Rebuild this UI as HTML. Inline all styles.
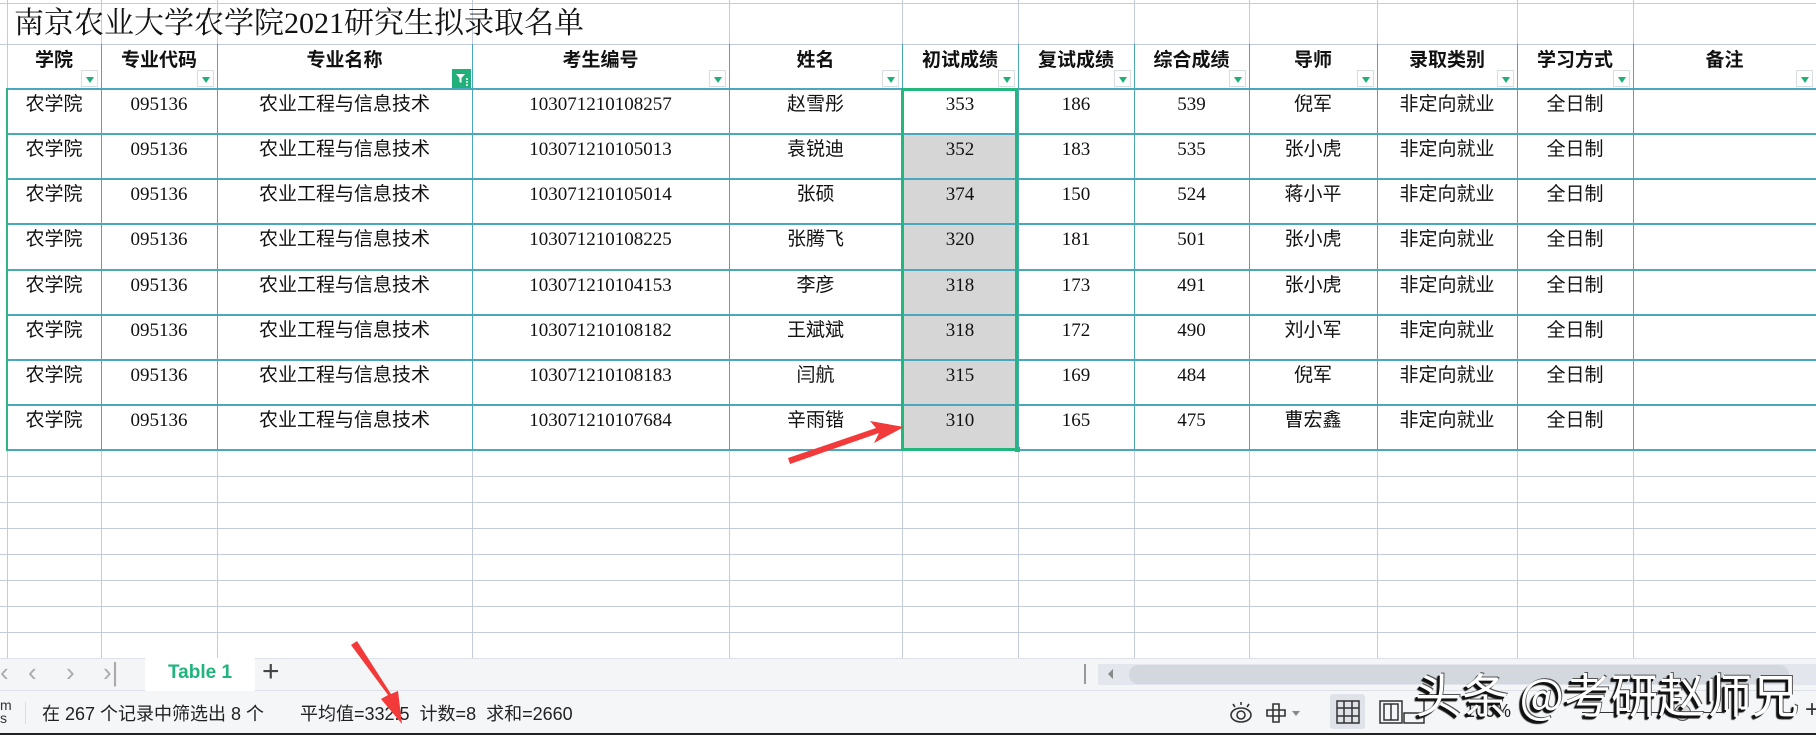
<!DOCTYPE html>
<html><head><meta charset="utf-8">
<style>
*{margin:0;padding:0;box-sizing:border-box}
body{width:1816px;height:735px;overflow:hidden;background:#fff;position:relative;font-family:"Liberation Serif","Noto Serif CJK SC",serif;}
.a{position:absolute}
.vl{position:absolute;width:1px;background:#c5cbdc}
.hl{position:absolute;height:1px;background:#c5cbdc}
.tl{position:absolute;height:2px;background:#4aa8bd}
.tv{position:absolute;width:1px;background:#4aa8bd}
.h{position:absolute;top:44px;height:45px;text-align:center;font-family:"Liberation Sans","Noto Sans CJK SC",sans-serif;font-weight:bold;font-size:19px;line-height:26px;color:#111}
.c{position:absolute;text-align:center;font-size:19px;line-height:26px;color:#111;font-family:"Liberation Serif","Noto Sans CJK SC",serif}
.dd{position:absolute;width:17px;height:17px;background:#fff;border:1px solid #d8dce3}
.dd:after{content:"";position:absolute;left:4px;top:6px;border-left:4px solid transparent;border-right:4px solid transparent;border-top:6px solid #1fb07a}
.sans{font-family:"Liberation Sans","Noto Sans CJK SC",sans-serif}
</style></head><body>
<!-- selected column -->
<div class="a" style="left:902px;top:134px;width:116px;height:316px;background:#d6d6d6"></div>
<div id="g"></div>
<!-- title -->
<div class="a" style="left:14px;top:4px;font-size:30px;line-height:40px;color:#111;font-family:'Liberation Serif','Noto Serif CJK SC',serif">南京农业大学农学院2021研究生拟录取名单</div>
<!-- tab bar -->
<div class="a" style="left:0;top:658px;width:1816px;height:33px;background:#f4f5f7;border-top:1px solid #dde0e6;border-bottom:1px solid #dde0e6"></div>
<div class="a" style="left:145px;top:658px;width:110px;height:33px;background:#fff"></div>
<div class="a sans" style="left:145px;top:662px;width:110px;text-align:center;font-size:19px;font-weight:bold;color:#1fb47c">Table 1</div>
<div class="a sans" style="left:0;top:657px;font-size:26px;color:#aaa">&#x2039;</div>
<div class="a sans" style="left:28px;top:657px;font-size:26px;color:#aaa">&#x2039;</div>
<div class="a sans" style="left:66px;top:657px;font-size:26px;color:#aaa">&#x203A;</div>
<div class="a sans" style="left:103px;top:657px;font-size:26px;color:#aaa">&#x203A;|</div>
<div class="a sans" style="left:262px;top:655px;font-size:30px;color:#444">+</div>
<div class="a" style="left:1084px;top:664px;width:2px;height:20px;border-left:1px solid #999;border-right:1px solid #999"></div>
<div class="a" style="left:1098px;top:664px;width:718px;height:21px;background:#e3e6ec"></div>
<div class="a" style="left:1108px;top:669px;border-top:5px solid transparent;border-bottom:5px solid transparent;border-right:5px solid #888"></div>
<div class="a" style="left:1129px;top:665px;width:660px;height:19px;background:#d3d7de;border-radius:10px"></div>
<!-- status -->
<div class="a" style="left:0;top:691px;width:1816px;height:42px;background:#f5f6f8"></div>
<div class="a" style="left:0;top:733px;width:1816px;height:2px;background:#222"></div>
<div class="a sans" style="left:0;top:699px;font-size:14px;color:#333;line-height:13px">m<br>s</div>
<div class="a" style="left:25px;top:702px;width:1px;height:22px;background:#ddd"></div>
<div class="a sans" style="left:42px;top:700px;font-size:18px;color:#222;white-space:pre">在 267 个记录中筛选出 8 个</div>
<div class="a sans" style="left:300px;top:700px;font-size:18px;color:#222;white-space:pre">平均值=332.5  计数=8  求和=2660</div>
<svg class="a" style="left:1228px;top:698px" width="80" height="30"><g fill="none" stroke="#333" stroke-width="1.6"><ellipse cx="13" cy="17" rx="10" ry="7"/><circle cx="13" cy="17" r="4"/><path d="M13 4v3M5 6l2 3M21 6l-2 3"/><path d="M45 6h6v6h6v6h-6v6h-6v-6h-6v-6h6z M45 12h6v6h-6z"/></g><path d="M64 13h8l-4 5z" fill="#888"/></svg>
<div class="a" style="left:1330px;top:694px;width:35px;height:35px;background:#dfe2e8;border-radius:3px"></div>
<svg class="a" style="left:1336px;top:700px" width="100" height="26"><g fill="none" stroke="#333" stroke-width="1.5"><rect x="1" y="1" width="22" height="22"/><path d="M8 1v22M16 1v22M1 8h22M1 16h22"/><rect x="44" y="1" width="22" height="22"/><rect x="48" y="4" width="14" height="16"/><path d="M55 4v16"/><path d="M88 1v22h-20v-10h20"/></g></svg>
<div class="a sans" style="left:1465px;top:701px;font-size:18px;color:#222">100%</div>
<div class="a" style="left:1582px;top:712px;width:140px;height:1px;background:#333"></div>
<div class="a" style="left:1674px;top:704px;width:17px;height:17px;border-radius:50%;background:#ddd;border:1px solid #555"></div>
<div class="a sans" style="left:1805px;top:696px;font-size:24px;color:#333">+</div>
<!-- watermark -->
<div class="a" style="left:1415px;top:658px;font-size:47px;font-family:'Noto Sans CJK SC',sans-serif;color:#fff;white-space:pre;text-shadow:-2px 2px 0 #111,-3px 3px 1px #111,1px -1px 0 #555">头条 @考研赵师兄</div>
<!-- arrows -->
<svg class="a" style="left:0;top:0" width="1816" height="735"><polygon points="790,464 879,433 874,443 904,427 870,421 876,428 788,458" fill="#f33a3a"/><polygon points="351,645 388,695 381,699 402,724 398,691 391,694 357,641" fill="#f33a3a"/></svg>
<script>
var X=[7,101,217,472,729,902,1018,1134,1249,1377,1517,1633,1816];
var R=[89];for(var i=1;i<=8;i++)R.push(Math.round(89+45.125*i));
var h='';
[101,217,472,729,902,1018,1134,1249,1377,1517,1633].forEach(function(x){h+='<div class="vl" style="left:'+x+'px;top:0;height:658px"></div>';});
h+='<div class="vl" style="left:7px;top:0;height:658px"></div>';
h+='<div class="hl" style="left:0;top:3px;width:1816px"></div>';
h+='<div class="hl" style="left:0;top:44px;width:1816px"></div>';
[476,502,528,554,580,606,632].forEach(function(y){h+='<div class="hl" style="left:0;top:'+y+'px;width:1816px"></div>';});
R.forEach(function(y){h+='<div class="tl" style="left:7px;top:'+(y-1)+'px;width:1809px"></div>';});
X.slice(1,12).forEach(function(x){h+='<div class="tv" style="left:'+x+'px;top:44px;height:406px"></div>';});
h+='<div class="a" style="left:6px;top:88px;width:2px;height:363px;background:#2fb483"></div>';
var H=['学院','专业代码','专业名称','考生编号','姓名','初试成绩','复试成绩','综合成绩','导师','录取类别','学习方式','备注'];
for(var j=0;j<12;j++){h+='<div class="h" style="left:'+X[j]+'px;width:'+(X[j+1]-X[j])+'px;padding-top:4px">'+H[j]+'</div>';
 if(j==2){h+='<svg class="a" style="left:'+(X[3]-20)+'px;top:69px" width="19" height="19"><rect width="19" height="19" fill="#21b07a"/><path d="M4 5h9l-3.5 4v5l-2-1v-4z" fill="#fff"/><path d="M14 10h2M14 13h2M14 16h2" stroke="#fff" stroke-width="1.5"/></svg>';}
 else h+='<div class="dd" style="left:'+(X[j+1]-20)+'px;top:70px"></div>';}
var D=[['赵雪彤','103071210108257','353','186','539','倪军'],['袁锐迪','103071210105013','352','183','535','张小虎'],['张硕','103071210105014','374','150','524','蒋小平'],['张腾飞','103071210108225','320','181','501','张小虎'],['李彦','103071210104153','318','173','491','张小虎'],['王斌斌','103071210108182','318','172','490','刘小军'],['闫航','103071210108183','315','169','484','倪军'],['辛雨锴','103071210107684','310','165','475','曹宏鑫']];
for(var i=0;i<8;i++){var d=D[i];var v=['农学院','095136','农业工程与信息技术',d[1],d[0],d[2],d[3],d[4],d[5],'非定向就业','全日制',''];
 for(var j=0;j<12;j++){h+='<div class="c" style="left:'+X[j]+'px;width:'+(X[j+1]-X[j])+'px;top:'+(R[i]+3)+'px">'+v[j]+'</div>';}}
h+='<div class="a" style="left:901px;top:88px;width:117px;height:363px;border:3px solid #22b77d"></div>';
h+='<div class="a" style="left:1015px;top:447px;width:5px;height:5px;background:#22b77d"></div>';
document.getElementById('g').innerHTML=h;
</script>
</body></html>
